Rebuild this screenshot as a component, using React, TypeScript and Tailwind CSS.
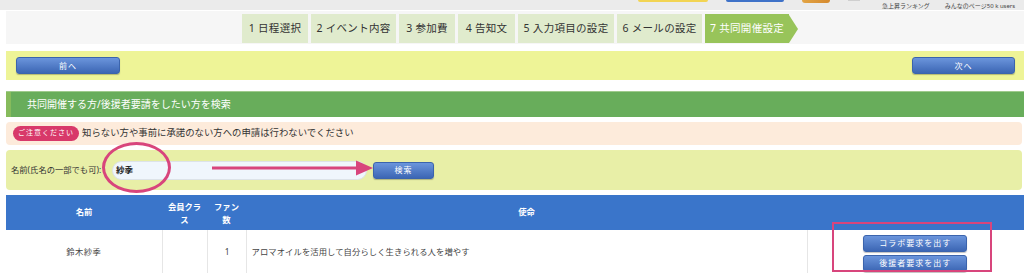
import React from "react";

const steps = [
  { label: "1 日程選択", w: "w-[66px]" },
  { label: "2 イベント内容", w: "w-[85px]" },
  { label: "3 参加費", w: "w-[56px]" },
  { label: "4 告知文", w: "w-[57px]" },
  { label: "5 入力項目の設定", w: "w-[96px]" },
  { label: "6 メールの設定", w: "w-[85px]" },
];

function BlueButton({ children, className = "" }: { children: React.ReactNode; className?: string }) {
  return (
    <button
      className={`flex items-center justify-center rounded-[3px] border border-[#3b64ad] bg-gradient-to-b from-[#6b95dc] to-[#3c66b4] text-[8px] tracking-[1px] text-white shadow-[0_1px_1px_rgba(0,0,0,0.25)] ${className}`}
    >
      {children}
    </button>
  );
}

export default function App() {
  return (
    <div
      className="relative h-[273px] w-[1024px] overflow-hidden bg-white text-[#333]"
      style={{ fontFamily: '"Noto Sans", "Noto Sans CJK JP", sans-serif' }}
    >
      {/* top strip */}
      <div className="flex h-[10px] items-start bg-[#ebebeb]">
        <div className="ml-[638px] h-[2px] w-[70px] rounded-b-[2px] bg-[#f2d453]" />
        <div className="ml-[18px] h-[2px] w-[58px] rounded-b-[2px] bg-[#3f72c8]" />
        <div className="ml-[18px] h-[3px] w-[28px] rounded-b-[3px] bg-gradient-to-r from-[#e2a444] to-[#d58a2f]" />
        <div className="ml-[18px] h-[1px] w-[12px] bg-[#cfcfcf]" />
        <div className="ml-[22px] flex items-center gap-[15px] pt-[2px] text-[6px] leading-[8px] text-[#444]">
          <span>急上昇ランキング</span>
          <span>みんなのページ50 k users</span>
        </div>
      </div>

      <div className="pl-[6px]">
        {/* steps */}
        <div className="mt-[1px] flex h-[33px] gap-[3px] bg-[#f6f6f6] pl-[236px] pt-[3px]">
          {steps.map((s) => (
            <div
              key={s.label}
              className={`flex h-[29px] items-center justify-center bg-[#e0ebcd] text-[10.5px] tracking-[0.3px] text-[#333] ${s.w}`}
            >
              {s.label}
            </div>
          ))}
          <div className="flex h-[29px] items-center">
            <div className="flex h-[29px] w-[84px] items-center justify-center bg-[#98c45a] text-[10.5px] tracking-[0.3px] text-white">
              7 共同開催設定
            </div>
            <div className="h-0 w-0 border-y-[14.5px] border-l-[9px] border-y-transparent border-l-[#98c45a]" />
          </div>
        </div>

        {/* prev / next */}
        <div className="mt-[7px] flex h-[29px] items-center justify-between bg-[#eef497] pl-[10px] pr-[9px]">
          <BlueButton className="h-[17px] w-[104px]">前へ</BlueButton>
          <BlueButton className="h-[17px] w-[103px]">次へ</BlueButton>
        </div>

        {/* section header */}
        <div className="mt-[11px] flex h-[26px] border-t border-[#9fcb8c] bg-[#68ad5b]">
          <div className="w-[5px] bg-[#86bb5c]" />
          <div className="flex items-center pl-[16px] text-[10px] text-white">
            共同開催する方/後援者要請をしたい方を検索
          </div>
        </div>

        {/* notice */}
        <div className="mr-[2px] mt-[5px] flex h-[23px] items-center gap-[3px] rounded-[4px] bg-[#fdebdb] pl-[7px]">
          <span className="flex h-[15px] items-center rounded-full bg-[#d8396a] px-[5px] text-[7px] tracking-[1px] text-white">
            ご注意ください
          </span>
          <span className="text-[9.4px] text-[#333]">知らない方や事前に承諾のない方への申請は行わないでください</span>
        </div>

        {/* search */}
        <div className="mr-[2px] mt-[5px] flex h-[40px] items-center rounded-[4px] bg-[#e8efa7] pl-[5px]">
          <span className="w-[101px] whitespace-nowrap text-[8.3px] text-[#333]">名前(氏名の一部でも可):</span>
          <div className="flex h-[19px] w-[255px] items-center rounded-full border border-[#dde3e8] bg-[#f0f6fc] pl-[3px] text-[8.5px] font-bold text-[#222]">
            紗季
          </div>
          <BlueButton className="ml-[6px] h-[17px] w-[61px]">検索</BlueButton>
        </div>

        {/* table */}
        <table className="mt-[5px] w-[1018px] border-collapse text-[8.3px]">
          <thead>
            <tr className="h-[35px] bg-[#3a75ca] text-white">
              <th className="w-[156px] font-bold">名前</th>
              <th className="w-[45px] font-bold leading-[13px]">会員クラ<br />ス</th>
              <th className="w-[39px] font-bold leading-[13px]">ファン<br />数</th>
              <th className="w-[561px] font-bold">使命</th>
              <th />
            </tr>
          </thead>
          <tbody>
            <tr className="h-[45px] border-b border-[#e6e6e6] text-[#444]">
              <td className="border-r border-[#e6e6e6] text-center tracking-[0.5px]">鈴木紗季</td>
              <td className="border-r border-[#e6e6e6]" />
              <td className="border-r border-[#e6e6e6] pr-[16px] text-right">1</td>
              <td className="border-r border-[#e6e6e6] pl-[5px] tracking-[0.1px]">アロマオイルを活用して自分らしく生きられる人を増やす</td>
              <td>
                <div className="flex flex-col items-center gap-[3px] pr-[1px] pt-[2px]">
                  <BlueButton className="h-[17px] w-[104px]">コラボ要求を出す</BlueButton>
                  <BlueButton className="h-[17px] w-[104px]">後援者要求を出す</BlueButton>
                </div>
              </td>
            </tr>
          </tbody>
        </table>
      </div>

      {/* annotations */}
      <div className="absolute left-[102px] top-[142px] h-[51px] w-[69px] rounded-[50%] border-[3px] border-[#d8457c]" />
      <svg className="absolute left-[210px] top-[160px]" width="166" height="16" viewBox="0 0 166 16">
        <line x1="2" y1="8" x2="148" y2="8" stroke="#d8457c" strokeWidth="3" />
        <polygon points="146,0.5 163,8 146,15.5" fill="#d8457c" />
      </svg>
      <div className="absolute left-[832px] top-[222px] h-[50px] w-[160px] border-2 border-[#d8457c]" />
    </div>
  );
}
